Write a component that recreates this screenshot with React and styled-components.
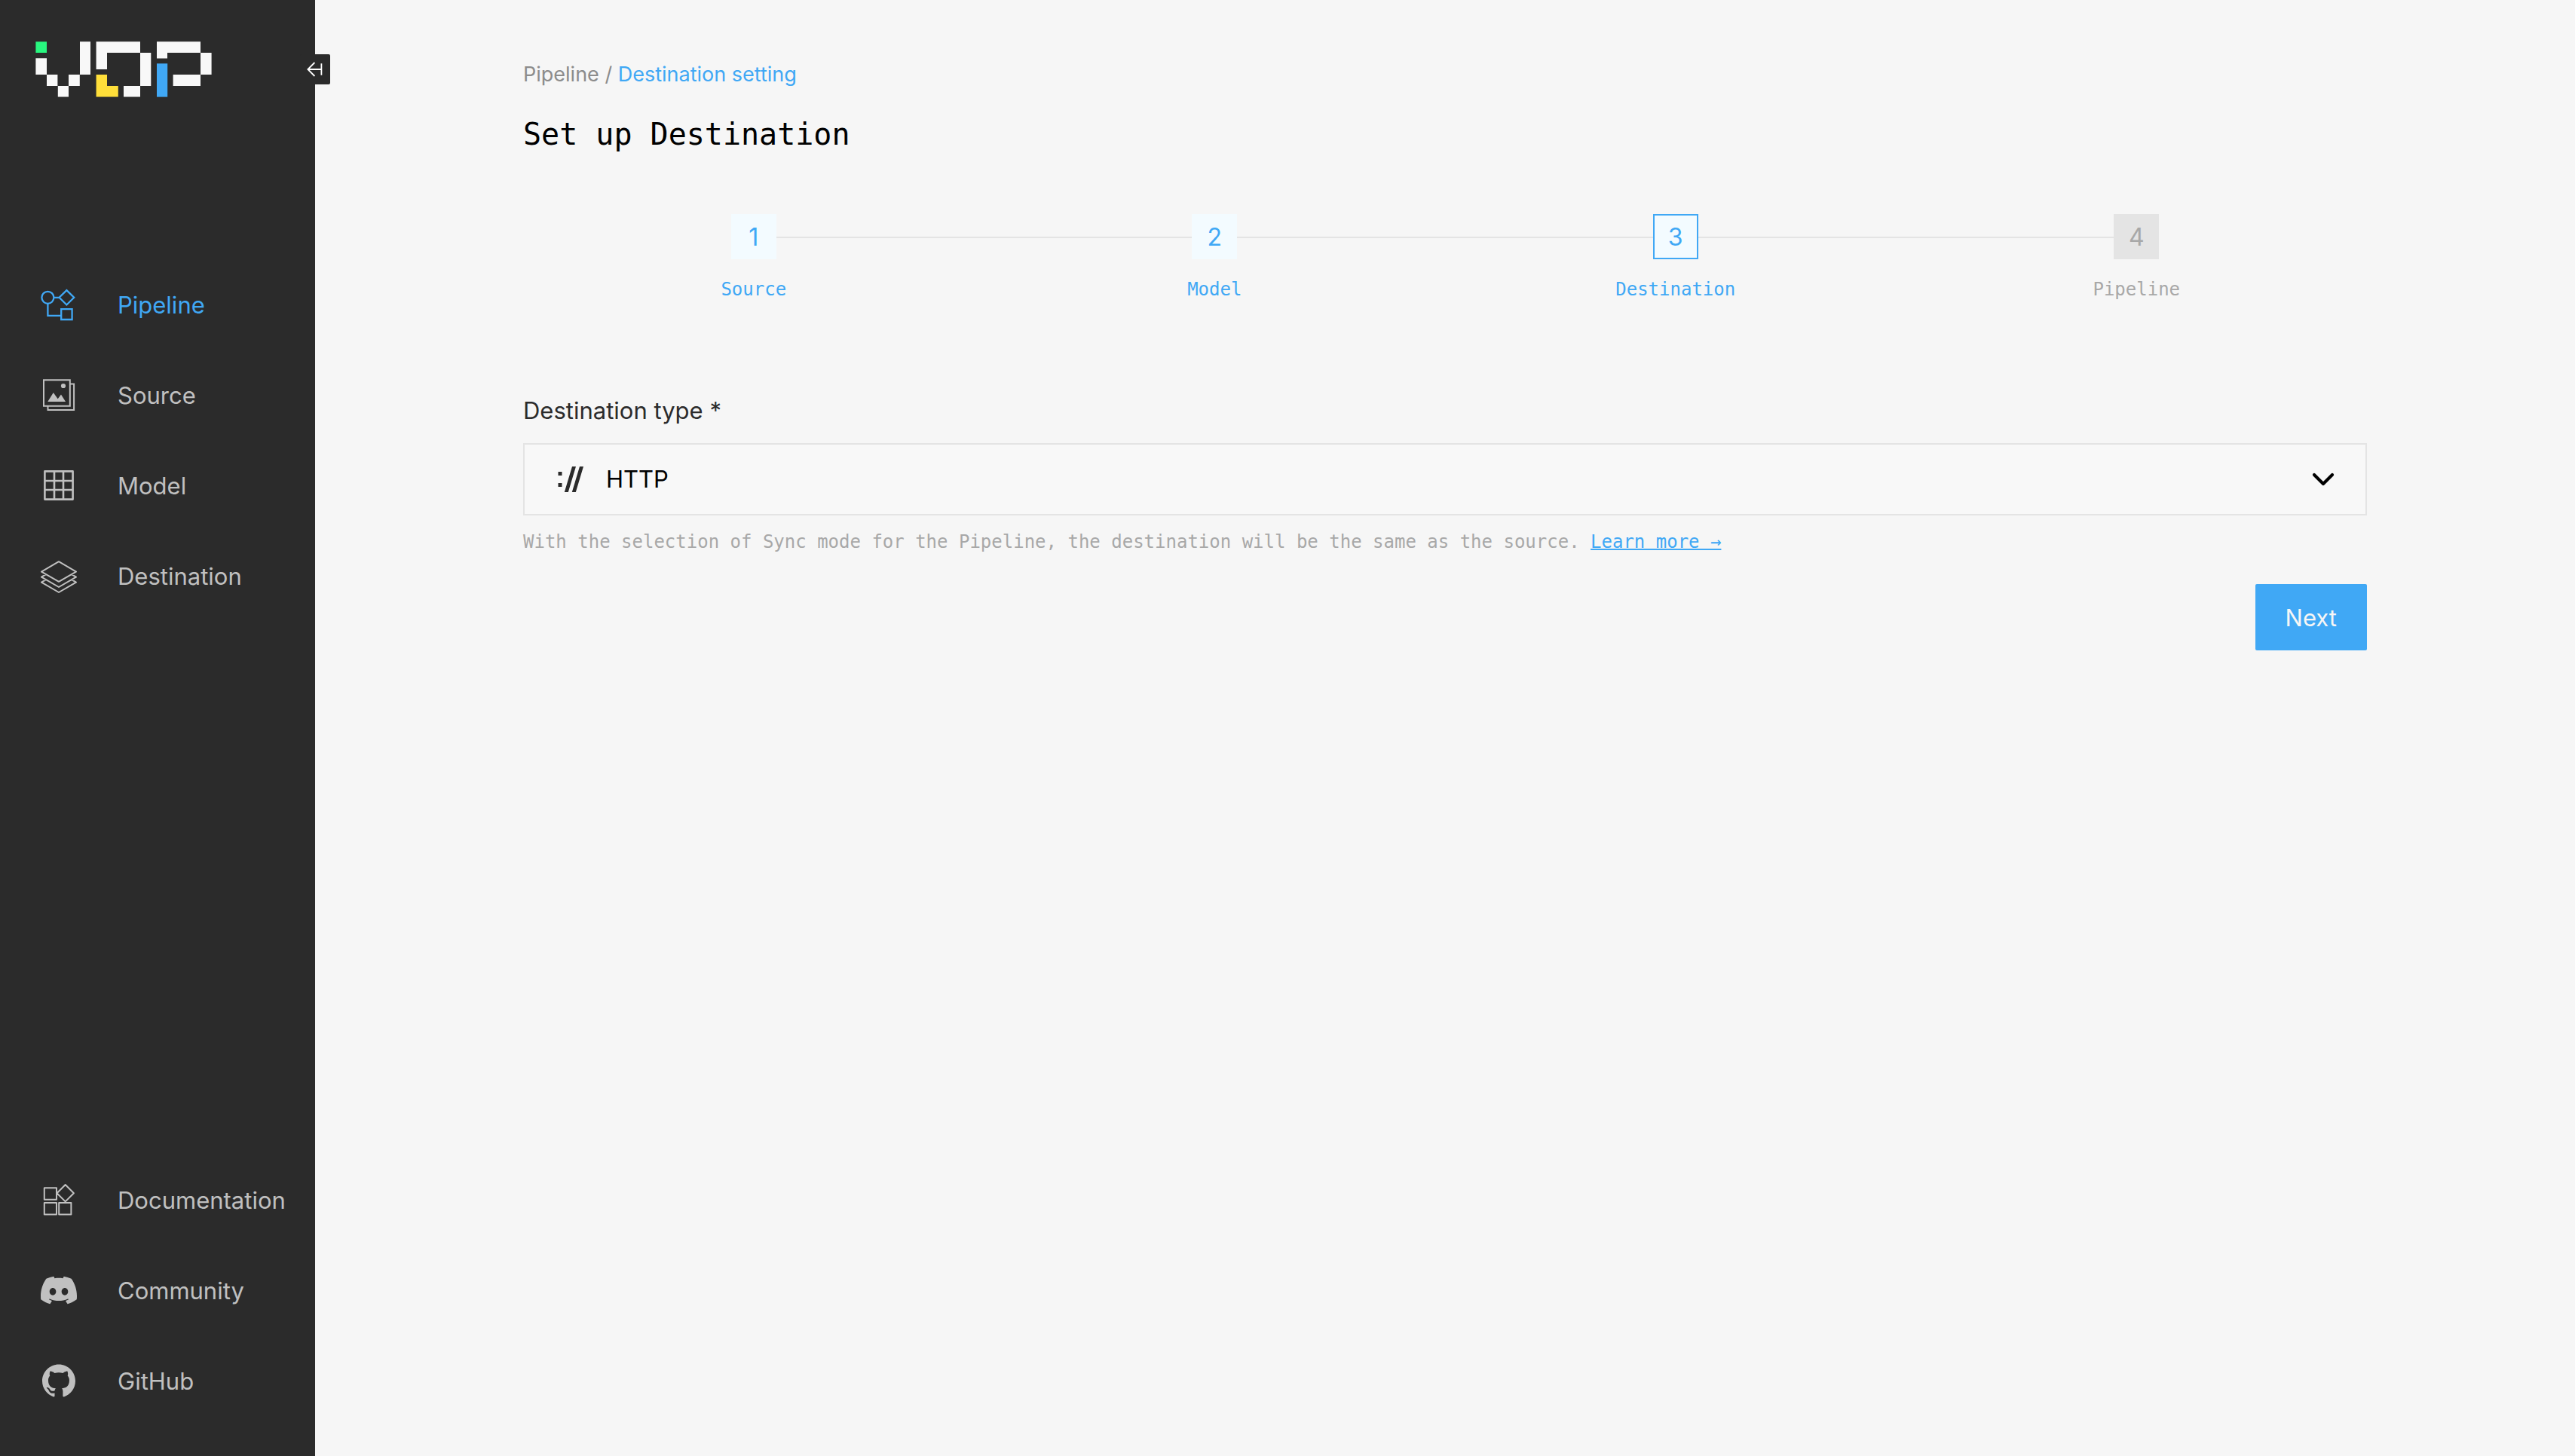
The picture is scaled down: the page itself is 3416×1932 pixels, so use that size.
import React, { useState } from "react";
import styled, { createGlobalStyle } from "styled-components";
import { SiDiscord, SiGithub } from "react-icons/si";

const c = {
  ink: "#2b2b2b",
  page: "#f6f6f6",
  field: "#f8f8f8",
  line: "#e4e4e4",
  blue: "#40a8f5",
  paleBlue: "#f3fbff",
  muted: "#a8a8a8",
  crumb: "#8c8c8c",
  nav: "#c0c0c0",
  green: "#28f77f",
  yellow: "#ffdf3a",
};

const sans = `Inter, "Liberation Sans", sans-serif`;
const mono = `"DejaVu Sans Mono", "Liberation Mono", monospace`;

const GlobalStyle = createGlobalStyle`
  *, *::before, *::after { box-sizing: border-box; }
  body { margin: 0; background: ${c.page}; font-family: ${sans}; }
`;

const Shell = styled.div`
  display: flex;
  min-height: 100vh;
`;

const Sidebar = styled.aside`
  position: relative;
  flex: none;
  display: flex;
  flex-direction: column;
  width: 418px;
  padding: 55px 0 70px;
  background: ${c.ink};
`;

const HomeLink = styled.a`
  display: block;
  height: 74px;
  padding-left: 47px;
`;

const CollapseButton = styled.button`
  position: absolute;
  top: 72px;
  right: -20px;
  width: 40px;
  height: 40px;
  padding: 0;
  border: 0;
  border-radius: 2px;
  background: ${c.ink};
  cursor: pointer;

  svg { display: block; }
`;

const NavList = styled.nav`
  display: flex;
  flex-direction: column;
  gap: 60px;
  margin-top: ${(p) => (p.$footer ? "auto" : "245px")};
`;

const NavLink = styled.a`
  display: flex;
  align-items: center;
  gap: 48px;
  height: 60px;
  padding-left: 48px;
  color: ${(p) => (p.$active ? c.blue : c.nav)};
  font-size: 31px;
  line-height: 40px;
  text-decoration: none;
`;

const NavName = styled.span`
  padding-top: 2px;
`;

const IconSlot = styled.span`
  flex: none;
  display: grid;
  place-items: center;
  width: 60px;
  height: 60px;
`;

const Main = styled.main`
  flex: 1;
  min-width: 0;
  padding: 80px 276px;
`;

const Breadcrumb = styled.nav`
  color: ${c.crumb};
  font-size: 27px;
  line-height: 38px;
`;

const CrumbLink = styled.a`
  color: ${(p) => (p.$current ? c.blue : "inherit")};
  text-decoration: none;
`;

const Title = styled.h1`
  margin: 32px 0 0;
  color: #000;
  font-family: ${mono};
  font-size: 40px;
  font-weight: 400;
  line-height: 56px;
`;

const Steps = styled.ol`
  display: grid;
  grid-template-columns: repeat(4, 1fr);
  margin: 78px 0 0;
  padding: 0;
  list-style: none;
`;

const Step = styled.li`
  display: flex;
  flex-direction: column;
  gap: 24px;
  color: ${(p) => (p.$state === "todo" ? c.muted : c.blue)};
`;

const StepTrack = styled.div`
  display: grid;
  grid-template-columns: 1fr 60px 1fr;
  align-items: center;
`;

const Rule = styled.span`
  height: 2px;
  margin-top: 2px;
  background: ${(p) => (p.$hidden ? "transparent" : c.line)};
`;

const StepBox = styled.span`
  height: 60px;
  border: 2px solid
    ${(p) => ({ done: c.paleBlue, current: c.blue, todo: c.line })[p.$state]};
  background: ${(p) => (p.$state === "todo" ? c.line : c.paleBlue)};
  font-size: 32px;
  line-height: 58px;
  text-align: center;
`;

const StepName = styled.span`
  font-family: ${mono};
  font-size: 24px;
  line-height: 32px;
  text-align: center;
`;

const Form = styled.form`
  display: flex;
  flex-direction: column;
  margin-top: 120px;
`;

const Label = styled.label`
  color: ${c.ink};
  font-size: 31px;
  line-height: 50px;
`;

const SelectWrap = styled.div`
  position: relative;
  margin-top: 18px;
`;

const Select = styled.select`
  display: block;
  width: 100%;
  height: 96px;
  padding: 0 100px 2px 108px;
  border: 2px solid ${c.line};
  border-radius: 0;
  appearance: none;
  background: ${c.field};
  color: #000;
  font-family: ${sans};
  font-size: 31px;
`;

const SelectMark = styled.span`
  position: absolute;
  top: 18px;
  left: ${(p) => (p.$end ? "auto" : "32px")};
  right: ${(p) => (p.$end ? "28px" : "auto")};
  width: 60px;
  height: 60px;
  pointer-events: none;

  svg { display: block; }
`;

const Hint = styled.p`
  margin: 19px 0 0;
  color: ${c.muted};
  font-family: ${mono};
  font-size: 24px;
  line-height: 32px;
`;

const HintLink = styled.a`
  color: ${c.blue};
  text-decoration: underline;
  text-decoration-thickness: 2px;
`;

const NextButton = styled.button`
  align-self: flex-end;
  height: 88px;
  margin-top: 40px;
  padding: 0 40px;
  border: 0;
  border-radius: 2px;
  background: ${c.blue};
  color: ${c.page};
  font-family: ${sans};
  font-size: 31px;
  cursor: pointer;
`;

const Line = ({ children, width = 2 }) => (
  <svg width="60" height="60" viewBox="0 0 60 60" fill="none" stroke="currentColor" strokeWidth={width} aria-hidden="true">
    {children}
  </svg>
);

const PipelineIcon = () => (
  <Line width={2.3}>
    <circle cx="15.4" cy="20.8" r="8" />
    <path d="M40.4 11.1l9.8 9.7-9.8 9.7-9.8-9.7zM23.4 20.8h7.2M15.4 28.8v16h17.6M33.2 36.2h14.4v13.8H33.2z" />
  </Line>
);

const SourceIcon = () => (
  <Line>
    <path d="M10 10.2h34.8v34.6H10zM45.6 15.4h4.5v34.5H15.5v-4.5" />
    <path d="M15.3 39l7.5-12 5.9 8.3 4.3-5.7 6 9.4z" fill="currentColor" stroke="none" />
    <circle cx="36" cy="18" r="3.1" fill="currentColor" stroke="none" />
  </Line>
);

const ModelIcon = () => (
  <Line width={2.6}>
    <path d="M11.4 11.4h37.200v37.200H11.4zM24 11.6v36.8M36 11.6v36.8M11.6 24h36.8M11.6 36h36.8" strokeLinejoin="round" />
  </Line>
);

const DestinationIcon = () => (
  <Line>
    <path d="M30 11.2l23 13.4-23 13.2-23-13.2zM13 28.1l-6 3.6 23 13.3 23-13.3-6-3.6M13 35.2l-6 3.5L30 52l23-13.3-6-3.5" strokeLinejoin="round" />
  </Line>
);

const DocumentationIcon = () => (
  <Line>
    <path d="M10.8 14.2h16.2v15.6H10.8zM10.8 34h16.2v15.6H10.8zM30.2 34h16.2v15.6H30.2zM38.7 10l11.2 11.2-11.2 11.2-11.2-11.2z" strokeLinejoin="round" />
  </Line>
);

const Logo = () => (
  <svg width="234" height="74" viewBox="0 0 234 74" fill={c.field} role="img" aria-label="VDP">
    <path d="M.4.3H15V15H.4z" fill={c.green} />
    <path d="M.4 22.3H15V44H.4zM15 44h14.4v15H15zM29.8 59H44v14.6H29.8zM44 44h14.8v15H44zM59 .3h14V44H59z" />
    <path d="M80.6.3H139V15H95v22H80.6zM139 15h14.3v44H139zM117 59h22v14.6h-22z" />
    <path d="M80.6 44H95v15h14.8v14.6H80.6z" fill={c.yellow} />
    <path d="M161 .3h58V15h-44v7.5h-14zM219 15h14.6v29H219zM182.6 44H219v15h-36.4z" />
    <path d="M161 29.3h14.2v44.3H161z" fill={c.blue} />
  </svg>
);

const CollapseIcon = () => (
  <svg width="40" height="40" viewBox="0 0 40 40" fill="none" stroke="#fff" strokeWidth="1.8" aria-hidden="true">
    <path d="M10 20h18M28.4 12.2v15.6M19.4 11l-9 9 9 9" />
  </svg>
);

const HttpIcon = () => (
  <svg width="60" height="60" viewBox="0 0 60 60" fill={c.ink} aria-hidden="true">
    <path d="M14.5 20h5v5h-5zM14.5 35h5v5h-5zM33 13h5l-10.2 34h-5zM43 13h5l-10.2 34h-5z" />
  </svg>
);

const ChevronIcon = () => (
  <svg width="60" height="60" viewBox="0 0 60 60" fill="none" stroke="#000" strokeWidth="4.2" strokeLinecap="round" strokeLinejoin="round" aria-hidden="true">
    <path d="M18 24l12 12 12-12" />
  </svg>
);

const mainLinks = [
  { name: "Pipeline", icon: <PipelineIcon />, active: true },
  { name: "Source", icon: <SourceIcon /> },
  { name: "Model", icon: <ModelIcon /> },
  { name: "Destination", icon: <DestinationIcon /> },
];

const footerLinks = [
  { name: "Documentation", icon: <DocumentationIcon /> },
  { name: "Community", icon: <SiDiscord size={48} /> },
  { name: "GitHub", icon: <SiGithub size={44} /> },
];

const steps = [
  { name: "Source", state: "done" },
  { name: "Model", state: "done" },
  { name: "Destination", state: "current" },
  { name: "Pipeline", state: "todo" },
];

const Links = ({ items, footer }) => (
  <NavList $footer={footer}>
    {items.map((item) => (
      <NavLink key={item.name} href="#" $active={item.active}>
        <IconSlot>{item.icon}</IconSlot>
        <NavName>{item.name}</NavName>
      </NavLink>
    ))}
  </NavList>
);

export default function App() {
  const [type, setType] = useState("http");

  return (
    <>
      <GlobalStyle />
      <Shell>
        <Sidebar>
          <HomeLink href="#">
            <Logo />
          </HomeLink>
          <CollapseButton type="button" aria-label="Collapse sidebar">
            <CollapseIcon />
          </CollapseButton>
          <Links items={mainLinks} />
          <Links items={footerLinks} footer />
        </Sidebar>
        <Main>
          <Breadcrumb>
            <CrumbLink href="#">Pipeline</CrumbLink> /{" "}
            <CrumbLink href="#" $current>Destination setting</CrumbLink>
          </Breadcrumb>
          <Title>Set up Destination</Title>
          <Steps>
            {steps.map((step, i) => (
              <Step key={step.name} $state={step.state}>
                <StepTrack>
                  <Rule $hidden={i === 0} />
                  <StepBox $state={step.state}>{i + 1}</StepBox>
                  <Rule $hidden={i === steps.length - 1} />
                </StepTrack>
                <StepName>{step.name}</StepName>
              </Step>
            ))}
          </Steps>
          <Form onSubmit={(e) => e.preventDefault()}>
            <Label htmlFor="destination-type">Destination type *</Label>
            <SelectWrap>
              <Select id="destination-type" value={type} onChange={(e) => setType(e.target.value)}>
                <option value="http">HTTP</option>
              </Select>
              <SelectMark><HttpIcon /></SelectMark>
              <SelectMark $end><ChevronIcon /></SelectMark>
            </SelectWrap>
            <Hint>
              With the selection of Sync mode for the Pipeline, the destination
              will be the same as the source.{" "}
              <HintLink href="#">Learn more →</HintLink>
            </Hint>
            <NextButton type="submit">Next</NextButton>
          </Form>
        </Main>
      </Shell>
    </>
  );
}
